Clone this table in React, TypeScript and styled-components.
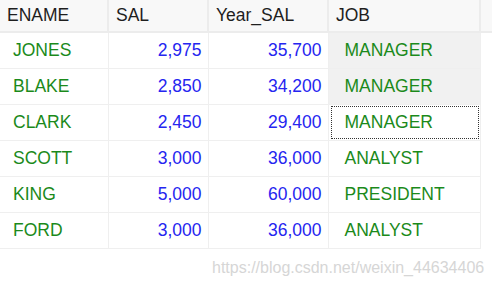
import React from "react";
import styled, { createGlobalStyle } from "styled-components";

const Global = createGlobalStyle`
  html, body { margin: 0; padding: 0; background: #fff; }
  body { font-family: "Liberation Sans", Arial, sans-serif; }
`;

const Page = styled.div`
  width: 492px;
  height: 287px;
  position: relative;
  overflow: hidden;
  background: #fff;
`;

const Grid = styled.table`
  border-collapse: collapse;
  table-layout: fixed;
  width: 492px;
  font-size: 17.5px;
`;

const Head = styled.th<{ $w?: number }>`
  width: ${({ $w }) => ($w ? `${$w}px` : "auto")};
  height: 32px;
  padding: 0 0 1px 7px;
  box-sizing: border-box;
  background: #f8f8f8;
  border-right: 2px solid #ececec;
  border-bottom: 2px solid #ececec;
  text-align: left;
  font-weight: 400;
  color: #1e1e1e;
  &:last-child { border-right: none; }
`;

const Row = styled.tr`
  height: 36px;
`;

const Cell = styled.td<{ $num?: boolean; $sel?: boolean; $focus?: boolean }>`
  box-sizing: border-box;
  padding: ${({ $num }) => ($num ? "0 6px 0 0" : "0 0 0 13px")};
  text-align: ${({ $num }) => ($num ? "right" : "left")};
  color: ${({ $num }) => ($num ? "#2525f0" : "#1b8a1b")};
  background: ${({ $sel }) => ($sel ? "#f1f1f1" : "#fff")};
  border-right: 1px solid #efefef;
  border-bottom: 1px solid #efefef;
  position: relative;
  &::after {
    content: "";
    display: ${({ $focus }) => ($focus ? "block" : "none")};
    position: absolute;
    left: 2px;
    top: 1px;
    right: 1px;
    bottom: 1px;
    border: 1px dotted #333;
  }
`;

const Filler = styled.td`
  border: none;
  background: #fff;
`;

const Watermark = styled.div`
  position: absolute;
  left: 212px;
  top: 259px;
  font-family: "Liberation Sans", Arial, sans-serif;
  font-size: 16px;
  color: #d6d6d6;
`;

const rows = [
  ["JONES", "2,975", "35,700", "MANAGER"],
  ["BLAKE", "2,850", "34,200", "MANAGER"],
  ["CLARK", "2,450", "29,400", "MANAGER"],
  ["SCOTT", "3,000", "36,000", "ANALYST"],
  ["KING", "5,000", "60,000", "PRESIDENT"],
  ["FORD", "3,000", "36,000", "ANALYST"],
];

export default function App() {
  return (
    <Page>
      <Global />
      <Grid>
        <thead>
          <tr>
            <Head $w={108}>ENAME</Head>
            <Head $w={100}>SAL</Head>
            <Head $w={120}>Year_SAL</Head>
            <Head $w={152}>JOB</Head>
            <Head />
          </tr>
        </thead>
        <tbody>
          {rows.map((r, i) => (
            <Row key={i}>
              <Cell>{r[0]}</Cell>
              <Cell $num>{r[1]}</Cell>
              <Cell $num>{r[2]}</Cell>
              <Cell $sel={i < 2} $focus={i === 2} style={{ paddingLeft: 16 }}>
                {r[3]}
              </Cell>
              <Filler />
            </Row>
          ))}
        </tbody>
      </Grid>
      <Watermark>https://blog.csdn.net/weixin_44634406</Watermark>
    </Page>
  );
}
